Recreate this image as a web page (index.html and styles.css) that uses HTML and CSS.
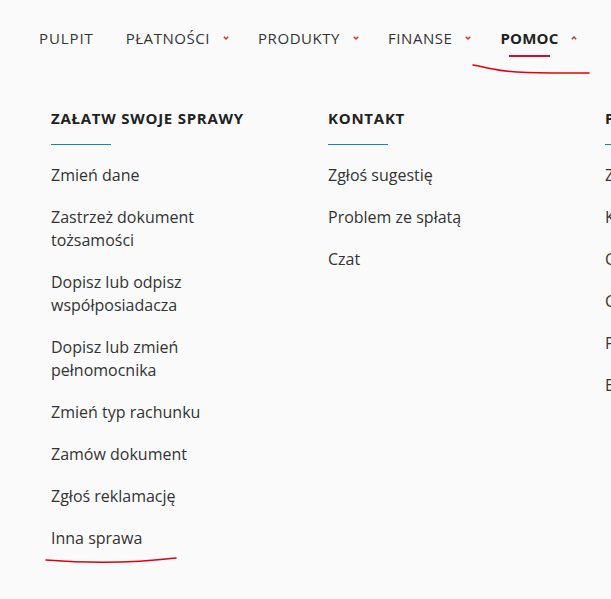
FILE: index.html
```html
<!DOCTYPE html>
<html lang="pl">
<head>
<meta charset="utf-8">
<link rel="stylesheet" href="styles.css">
</head>
<body>
<header class="nav">
  <a class="nav-item first">PULPIT</a>
  <a class="nav-item">PŁATNOŚCI<svg class="chev" viewBox="0 0 6 4"><path d="M0.8 0.8l2.2 2.2 2.2-2.2"/></svg></a>
  <a class="nav-item">PRODUKTY<svg class="chev" viewBox="0 0 6 4"><path d="M0.8 0.8l2.2 2.2 2.2-2.2"/></svg></a>
  <a class="nav-item">FINANSE<svg class="chev" viewBox="0 0 6 4"><path d="M0.8 0.8l2.2 2.2 2.2-2.2"/></svg></a>
  <a class="nav-item active"><span class="label">POMOC</span><svg class="chev" viewBox="0 0 6 4"><path d="M0.8 3.2l2.2-2.2 2.2 2.2"/></svg></a>
</header>
<main class="menu">
  <section class="col">
    <h3 class="col-title">ZAŁATW SWOJE SPRAWY</h3>
    <ul class="links">
      <li>Zmień dane</li>
      <li>Zastrzeż dokument tożsamości</li>
      <li>Dopisz lub odpisz współposiadacza</li>
      <li>Dopisz lub zmień pełnomocnika</li>
      <li>Zmień typ rachunku</li>
      <li>Zamów dokument</li>
      <li>Zgłoś reklamację</li>
      <li>Inna sprawa</li>
    </ul>
  </section>
  <section class="col">
    <h3 class="col-title">KONTAKT</h3>
    <ul class="links">
      <li>Zgłoś sugestię</li>
      <li>Problem ze spłatą</li>
      <li>Czat</li>
    </ul>
  </section>
  <section class="col col-cut">
    <h3 class="col-title">PRZYDATNE</h3>
    <ul class="links">
      <li>Zastrzeż</li>
      <li>Kursy</li>
      <li>Cennik</li>
      <li>Centrum</li>
      <li>Pytania</li>
      <li>Emerytura</li>
    </ul>
  </section>
</main>
<svg class="scribble scribble-top" viewBox="0 0 130 14"><path d="M2 2 C10 3 14 5 22 6 C40 10 60 10 80 10 L118 10"/></svg>
<svg class="scribble scribble-bottom" viewBox="0 0 134 8"><path d="M2 4 C40 7 90 7 132 2"/></svg>
</body>
</html>
```
FILE: styles.css
```css
html, body {
  margin: 0;
  padding: 0;
  background: #fafafa;
  color: #333;
  font-family: "Open Sans", "Liberation Sans", sans-serif;
  width: 611px;
  overflow: hidden;
}
body { position: relative; height: 599px; }

.nav {
  display: flex;
  align-items: center;
  padding: 28px 0 0 39px;
  height: 20px;
  white-space: nowrap;
}
.nav-item {
  display: inline-flex;
  align-items: center;
  font-size: 15px;
  letter-spacing: 0.55px;
  color: #333;
  line-height: 20px;
  margin-right: 29px;
  position: relative;
}
.nav-item.first {
  letter-spacing: 0.9px;
  margin-right: 32px;
}
.nav-item .chev {
  width: 6px;
  height: 4px;
  margin-left: 13px;
  fill: none;
  stroke: #d0262a;
  stroke-width: 1.3;
}
.nav-item.active {
  font-weight: 700;
  color: #222;
  letter-spacing: 0.2px;
}
.nav-item.active .label { position: relative; }
.nav-item.active .label::after {
  content: "";
  position: absolute;
  left: 9px;
  right: 8px;
  top: 27px;
  height: 2px;
  background: #c8102e;
}

.menu {
  display: flex;
  padding: 60px 0 0 51px;
}
.col {
  flex: 0 0 277px;
}
.col-cut {
  flex: 0 0 auto;
  width: 6px;
  overflow: hidden;
}
.col-title {
  margin: 0;
  font-size: 15px;
  font-weight: 700;
  letter-spacing: 0.75px;
  line-height: 20px;
  color: #222;
  white-space: nowrap;
}
.col-title::after {
  content: "";
  display: block;
  width: 60px;
  height: 1px;
  background: #1a86b4;
  margin-top: 16px;
}
.links {
  list-style: none;
  margin: 19px 0 0;
  padding: 0;
  display: flex;
  flex-direction: column;
  gap: 19px;
  font-size: 16px;
  line-height: 23px;
  color: #333;
}
.links li { max-width: 170px; white-space: normal; }
.col-cut .links li { white-space: nowrap; }

.scribble {
  position: absolute;
  fill: none;
  stroke: #e00010;
  stroke-width: 1.6;
  stroke-linecap: round;
}
.scribble-top { left: 471px; top: 63px; width: 130px; height: 14px; }
.scribble-bottom { left: 44px; top: 556px; width: 134px; height: 8px; }
```
